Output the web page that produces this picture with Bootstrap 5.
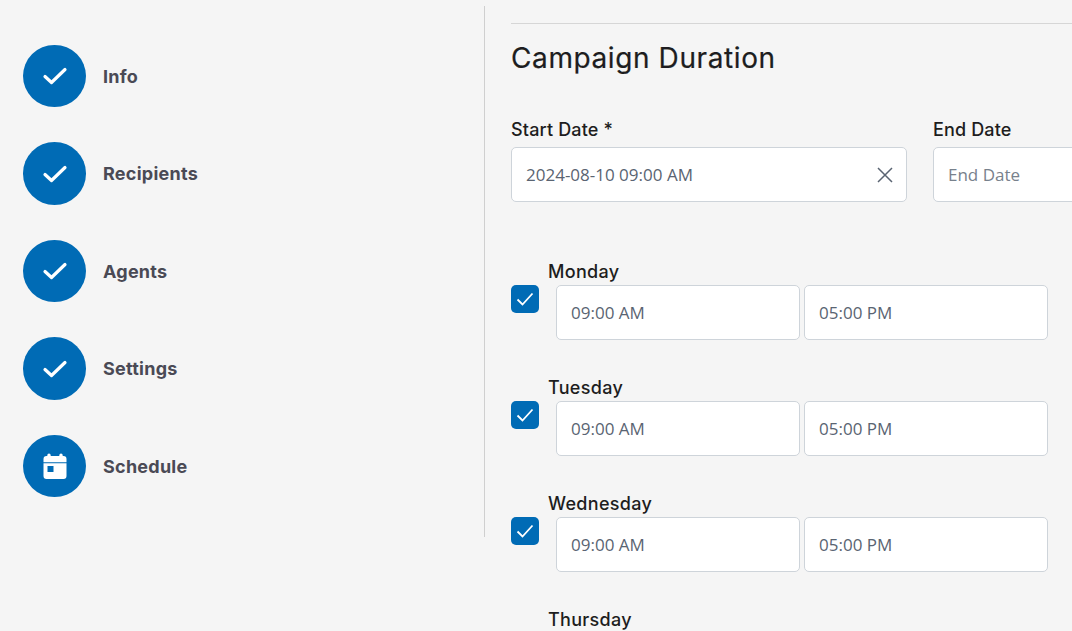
<!DOCTYPE html>
<html lang="en">
<head>
  <meta charset="UTF-8" />
  <meta name="viewport" content="width=device-width, initial-scale=1.0"/>
  <title>Campaign Duration</title>
  <link href="https://cdn.jsdelivr.net/npm/bootstrap@5.3.3/dist/css/bootstrap.min.css" rel="stylesheet" />
  <style>
    html, body { height: 631px; overflow: hidden; }
    body { background-color: #f5f5f5; font-family: Inter, "Liberation Sans", sans-serif; color: #1d1d20; }

    .wizard-side { width: 485px; height: 531px; margin-top: 6px; padding: 39px 0 0 23px; border-right: 1px solid #cfcfcf; gap: 35.1px; }
    .step-dot { width: 63px; height: 62.4px; background-color: #006bb5; }
    .step-name { margin-left: 17px; font-size: 18px; font-weight: 700; color: #4a4a55; letter-spacing: .25px; }

    .wizard-main { width: 640px; padding-left: 26px; padding-top: 23px; }
    .top-rule { height: 1px; background-color: #d6d6d6; }
    .main-title { font-size: 28px; font-weight: 400; line-height: 36px; margin: 16px 0 0 0; letter-spacing: .6px; -webkit-text-stroke: .2px #1d1d20; }
    .date-row { margin-top: 43px; gap: 26px; }
    .date-box { width: 396px; flex-shrink: 0; }
    .field-label { font-size: 18px; font-weight: 500; line-height: 22px; margin-bottom: 6px; letter-spacing: .15px; }
    .field-box { height: 55px; background-color: #fff; border: 1px solid #ced4da; border-radius: 5px; padding: 0 13px 0 14px; font-family: "Open Sans", "Noto Sans", sans-serif; font-size: 17px; color: #5a6472; }
    .field-box.is-empty { color: #78818c; }
    .day-list { margin-top: 59px; }
    .day-item { height: 116px; }
    .day-name { margin-left: 37px; font-size: 18px; font-weight: 500; line-height: 22px; margin-bottom: 2px; letter-spacing: .3px; }
    .day-tick { width: 28px; height: 28px; background-color: #006bb5; border-radius: 5px; margin-right: 17px; }
    .time-box { width: 244px; margin-right: 4px; }
  </style>
</head>
<body>
  <div class="d-flex">
    <div class="wizard-side d-flex flex-column flex-shrink-0">
      <div class="d-flex align-items-center">
        <div class="step-dot rounded-circle d-flex align-items-center justify-content-center">
          <svg width="26" height="20" viewBox="0 0 26 20"><path d="M3 10.500l6.500 6L23 3.500" fill="none" stroke="#fff" stroke-width="3.200" stroke-linecap="round" stroke-linejoin="round"/></svg>
        </div>
        <span class="step-name">Info</span>
      </div>
      <div class="d-flex align-items-center">
        <div class="step-dot rounded-circle d-flex align-items-center justify-content-center">
          <svg width="26" height="20" viewBox="0 0 26 20"><path d="M3 10.500l6.500 6L23 3.500" fill="none" stroke="#fff" stroke-width="3.200" stroke-linecap="round" stroke-linejoin="round"/></svg>
        </div>
        <span class="step-name">Recipients</span>
      </div>
      <div class="d-flex align-items-center">
        <div class="step-dot rounded-circle d-flex align-items-center justify-content-center">
          <svg width="26" height="20" viewBox="0 0 26 20"><path d="M3 10.500l6.500 6L23 3.500" fill="none" stroke="#fff" stroke-width="3.200" stroke-linecap="round" stroke-linejoin="round"/></svg>
        </div>
        <span class="step-name">Agents</span>
      </div>
      <div class="d-flex align-items-center">
        <div class="step-dot rounded-circle d-flex align-items-center justify-content-center">
          <svg width="26" height="20" viewBox="0 0 26 20"><path d="M3 10.500l6.500 6L23 3.500" fill="none" stroke="#fff" stroke-width="3.200" stroke-linecap="round" stroke-linejoin="round"/></svg>
        </div>
        <span class="step-name">Settings</span>
      </div>
      <div class="d-flex align-items-center">
        <div class="step-dot rounded-circle d-flex align-items-center justify-content-center">
          <svg width="24" height="26" viewBox="0 0 24 26"><path fill="#fff" fill-rule="evenodd" d="M6 .5a1.700 1.700 0 0 1 1.700 1.700V3h8.600v-.8a1.700 1.700 0 0 1 3.400 0V3h.8A3 3 0 0 1 23.500 6v17a3 3 0 0 1-3 3h-17a3 3 0 0 1-3-3V6a3 3 0 0 1 3-3h.8v-.8A1.700 1.700 0 0 1 6 .5zM.5 9.200v1h23v-1zM4.500 13v6h6v-6z"/></svg>
        </div>
        <span class="step-name">Schedule</span>
      </div>
    </div>

    <div class="wizard-main flex-shrink-0">
      <div class="top-rule"></div>
      <h2 class="main-title">Campaign Duration</h2>

      <div class="date-row d-flex">
        <div class="date-box">
          <div class="field-label">Start Date *</div>
          <div class="field-box d-flex align-items-center justify-content-between">
            <span>2024-08-10 09:00 AM</span>
            <svg width="16" height="16" viewBox="0 0 16 16"><path d="M1 1l14 14M15 1L1 15" stroke="#5a6472" stroke-width="1.500" fill="none"/></svg>
          </div>
        </div>
        <div class="date-box">
          <div class="field-label">End Date</div>
          <div class="field-box is-empty d-flex align-items-center">End Date</div>
        </div>
      </div>

      <div class="day-list">
        <div class="day-item">
          <div class="day-name">Monday</div>
          <div class="d-flex">
            <div class="day-tick d-flex align-items-center justify-content-center"><svg width="18" height="14" viewBox="0 0 18 14"><path d="M1.500 7.500l5 5L16.500 1.500" fill="none" stroke="#fff" stroke-width="1.800"/></svg></div>
            <div class="field-box time-box d-flex align-items-center">09:00 AM</div>
            <div class="field-box time-box d-flex align-items-center">05:00 PM</div>
          </div>
        </div>
        <div class="day-item">
          <div class="day-name">Tuesday</div>
          <div class="d-flex">
            <div class="day-tick d-flex align-items-center justify-content-center"><svg width="18" height="14" viewBox="0 0 18 14"><path d="M1.500 7.500l5 5L16.500 1.500" fill="none" stroke="#fff" stroke-width="1.800"/></svg></div>
            <div class="field-box time-box d-flex align-items-center">09:00 AM</div>
            <div class="field-box time-box d-flex align-items-center">05:00 PM</div>
          </div>
        </div>
        <div class="day-item">
          <div class="day-name">Wednesday</div>
          <div class="d-flex">
            <div class="day-tick d-flex align-items-center justify-content-center"><svg width="18" height="14" viewBox="0 0 18 14"><path d="M1.500 7.500l5 5L16.500 1.500" fill="none" stroke="#fff" stroke-width="1.800"/></svg></div>
            <div class="field-box time-box d-flex align-items-center">09:00 AM</div>
            <div class="field-box time-box d-flex align-items-center">05:00 PM</div>
          </div>
        </div>
        <div class="day-item">
          <div class="day-name">Thursday</div>
        </div>
      </div>
    </div>
  </div>

  <script src="https://cdn.jsdelivr.net/npm/bootstrap@5.3.3/dist/js/bootstrap.bundle.min.js"></script>
</body>
</html>
